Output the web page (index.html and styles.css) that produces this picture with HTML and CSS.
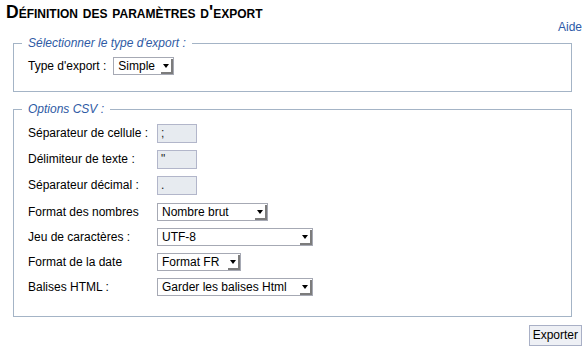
FILE: index.html
```html
<!DOCTYPE html>
<html lang="fr">
<head>
<meta charset="utf-8">
<title>Définition des paramètres d'export</title>
<link rel="stylesheet" href="styles.css">
</head>
<body>
<div class="page">
  <h1 class="title">Définition des paramètres d'export</h1>
  <div class="help"><a href="#" class="help-link">Aide</a></div>

  <fieldset class="box box-type">
    <legend class="box-legend">Sélectionner le type d'export :</legend>
    <div class="row row-sel">
      <span class="label label-inline">Type d'export :</span>
      <div class="select w-simple"><span class="select-text">Simple</span><span class="select-btn"><span class="tri"></span></span></div>
    </div>
  </fieldset>

  <fieldset class="box box-csv">
    <legend class="box-legend">Options CSV :</legend>
    <div class="row row-in">
      <span class="label">Séparateur de cellule :</span>
      <div class="textbox">;</div>
    </div>
    <div class="row row-in">
      <span class="label">Délimiteur de texte :</span>
      <div class="textbox">"</div>
    </div>
    <div class="row row-in">
      <span class="label">Séparateur décimal :</span>
      <div class="textbox">.</div>
    </div>
    <div class="row row-sel first-sel">
      <span class="label">Format des nombres</span>
      <div class="select w-nombre"><span class="select-text">Nombre brut</span><span class="select-btn"><span class="tri"></span></span></div>
    </div>
    <div class="row row-sel">
      <span class="label">Jeu de caractères :</span>
      <div class="select w-long"><span class="select-text">UTF-8</span><span class="select-btn"><span class="tri"></span></span></div>
    </div>
    <div class="row row-sel">
      <span class="label">Format de la date</span>
      <div class="select w-date"><span class="select-text">Format FR</span><span class="select-btn"><span class="tri"></span></span></div>
    </div>
    <div class="row row-sel">
      <span class="label">Balises HTML :</span>
      <div class="select w-long"><span class="select-text">Garder les balises Html</span><span class="select-btn"><span class="tri"></span></span></div>
    </div>
  </fieldset>

  <div class="actions"><button class="btn" type="button">Exporter</button></div>
</div>
</body>
</html>
```
FILE: styles.css
```css
html, body {
  margin: 0;
  padding: 0;
  background: #ffffff;
}
body {
  font-family: "Liberation Sans", Arial, sans-serif;
  font-size: 12px;
  color: #000;
}
.page {
  width: 587px;
  box-sizing: border-box;
  padding: 0 5px 0 6px;
}
.title {
  margin: 0;
  padding-top: 4px;
  font-size: 17.5px;
  line-height: 16px;
  font-weight: bold;
  font-variant: small-caps;
  color: #000;
}
.help {
  text-align: right;
  line-height: 14px;
  margin-top: 0;
}
.help-link {
  color: #2d5ba8;
  text-decoration: none;
  font-size: 12px;
}
.box {
  margin: 2px 10px 0 7px;
  border: 1px solid #a4b4c6;
  padding: 0 14px 0 14px;
  min-width: 0;
}
.box-csv {
  margin-top: 10px;
  padding-bottom: 17px;
}
.box-type {
  padding-bottom: 13px;
}
.box-legend {
  padding: 0 6px;
  margin-left: -6px;
  font-style: italic;
  color: #2e5aa4;
  line-height: 14px;
  font-size: 12px;
}
.row {
  display: flex;
  align-items: center;
}
.box-type .row {
  margin-top: 3px;
}
.box-csv .row:first-of-type {
  margin-top: 4px;
}
.row-in {
  height: 26px;
}
.row-sel {
  height: 25px;
}
.first-sel {
  margin-top: 1px;
}
.label {
  width: 129px;
  flex: none;
  line-height: 14px;
}
.label-inline {
  width: auto;
  margin-right: 7px;
}
.textbox {
  width: 40px;
  height: 19px;
  box-sizing: border-box;
  border: 1px solid #b2b6ca;
  background: #e7ebf0;
  padding: 0 3px;
  line-height: 17px;
  font-size: 12px;
  color: #222;
}
.select {
  height: 18px;
  box-sizing: border-box;
  border: 1px solid #a6a9b4;
  background: #fff;
  display: flex;
  align-items: stretch;
}
.select-text {
  flex: 1;
  padding-left: 4px;
  line-height: 16px;
  white-space: nowrap;
  overflow: hidden;
}
.select-btn {
  width: 12px;
  flex: none;
  box-sizing: border-box;
  border-right: 2px solid #7c7c7c;
  border-bottom: 2px solid #7c7c7c;
  margin: 1px 0 0 0;
  display: flex;
  align-items: center;
  justify-content: center;
}
.tri {
  width: 0;
  height: 0;
  border-left: 3px solid transparent;
  border-right: 3px solid transparent;
  border-top: 4px solid #000;
  margin-top: 1px;
}
.w-simple { width: 61px; }
.w-nombre { width: 111px; }
.w-long { width: 156px; }
.w-date { width: 84px; }
.actions {
  display: flex;
  justify-content: flex-end;
  margin-top: 8px;
}
.btn {
  font-family: "Liberation Sans", Arial, sans-serif;
  font-size: 12px;
  height: 21px;
  padding: 0 3px;
  border: 1px solid #a9b0c6;
  background: #eef0f5;
  color: #000;
  line-height: 19px;
}
```
